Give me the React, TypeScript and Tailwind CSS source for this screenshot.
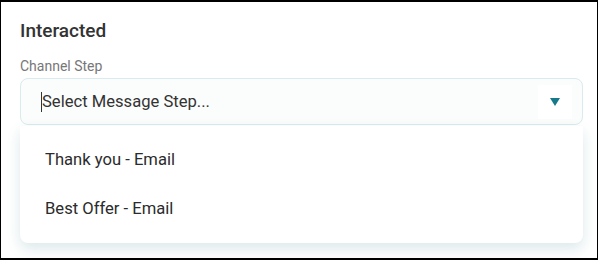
import React from "react";

const options = ["Thank you - Email", "Best Offer - Email"];

export default function App() {
  return (
    <div
      className="w-[598px] h-[260px] border border-t-2 border-b-2 border-black bg-white overflow-hidden"
      style={{ fontFamily: "Roboto, 'Liberation Sans', sans-serif" }}
    >
      <div className="pl-[19px] pr-[14px] pt-[18px]">
        <h2 className="text-[19px] leading-[22px] font-medium text-[#333]">
          Interacted
        </h2>
        <p className="mt-[15px] text-[14px] leading-[18px] text-[#777]">
          Channel Step
        </p>
        <div className="relative mt-[3px]">
          <div className="h-[47px] flex items-center justify-between rounded-[8px] border border-[#d9ebee] bg-[#fbfcfc] pl-[20px] pr-[10px]">
            <span className="text-[16.6px] text-[#333] border-l border-[#333] leading-[20px]">
              Select Message Step...
            </span>
            <span className="flex items-center justify-center w-[34px] h-[34px] bg-white">
              <svg width="10" height="8" viewBox="0 0 10 8">
                <path d="M0 0h10L5 8z" fill="#16798a" />
              </svg>
            </span>
          </div>
          <ul className="mt-[1px] rounded-b-[8px] bg-white shadow-[0_6px_14px_rgba(40,120,130,0.16)] pt-[10px] pb-[9px]">
            {options.map((o) => (
              <li
                key={o}
                className="h-[49px] flex items-center pl-[25px] text-[16.6px] text-[#2b2b2b]"
              >
                {o}
              </li>
            ))}
          </ul>
        </div>
      </div>
    </div>
  );
}
